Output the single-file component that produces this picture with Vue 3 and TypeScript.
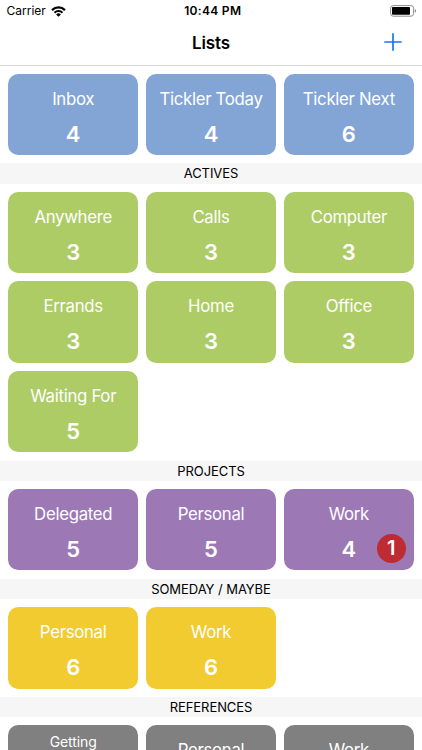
<script setup lang="ts">
interface ListCard {
  name: string
  count?: number
  overdue?: number
  compact?: boolean
}

interface Section {
  title?: string
  tone: 'blue' | 'green' | 'purple' | 'yellow' | 'gray'
  cards: ListCard[]
}

const sections: Section[] = [
  {
    tone: 'blue',
    cards: [
      { name: 'Inbox', count: 4 },
      { name: 'Tickler Today', count: 4 },
      { name: 'Tickler Next', count: 6 },
    ],
  },
  {
    title: 'Actives',
    tone: 'green',
    cards: [
      { name: 'Anywhere', count: 3 },
      { name: 'Calls', count: 3 },
      { name: 'Computer', count: 3 },
      { name: 'Errands', count: 3 },
      { name: 'Home', count: 3 },
      { name: 'Office', count: 3 },
      { name: 'Waiting For', count: 5 },
    ],
  },
  {
    title: 'Projects',
    tone: 'purple',
    cards: [
      { name: 'Delegated', count: 5 },
      { name: 'Personal', count: 5 },
      { name: 'Work', count: 4, overdue: 1 },
    ],
  },
  {
    title: 'Someday / Maybe',
    tone: 'yellow',
    cards: [
      { name: 'Personal', count: 6 },
      { name: 'Work', count: 6 },
    ],
  },
  {
    title: 'References',
    tone: 'gray',
    cards: [{ name: 'Getting', compact: true }, { name: 'Personal' }, { name: 'Work' }],
  },
]
</script>

<template>
  <div class="screen">
    <div class="status">
      <div class="carrier">
        <span>Carrier</span>
        <svg class="wifi" width="15" height="11" viewBox="0 0 15 11">
          <path d="M1 4.1a9.2 9.2 0 0 1 13 0" fill="none" stroke="#000" stroke-width="2.2" />
          <path d="M3.5 6.7a5.7 5.7 0 0 1 8 0" fill="none" stroke="#000" stroke-width="1.9" />
          <path d="M7.5 10.8 5.1 8.4a3.4 3.4 0 0 1 4.8 0z" />
        </svg>
      </div>
      <span class="time">10:44 PM</span>
      <svg class="battery" width="27" height="12" viewBox="0 0 27 12">
        <rect x="0.6" y="0.6" width="23" height="10.6" rx="2.6" fill="#fff" stroke="#8c8c8c" stroke-width="1" />
        <rect x="2" y="2" width="18" height="7.8" rx="0.8" />
        <path d="M24.8 4.1c1.8.5 1.8 3.1 0 3.6z" fill="#8c8c8c" />
      </svg>
    </div>

    <header class="nav">
      <h1>Lists</h1>
      <button class="add" type="button" aria-label="Add list">
        <svg width="18" height="18" viewBox="0 0 18 18">
          <path d="M9 .3v17.4M.3 9h17.4" fill="none" stroke="#1479ed" stroke-width="1.7" />
        </svg>
      </button>
    </header>

    <main>
      <section v-for="(section, i) in sections" :key="i">
        <h2 v-if="section.title">{{ section.title }}</h2>
        <div class="grid">
          <div v-for="card in section.cards" :key="card.name" class="card" :class="section.tone">
            <div class="name" :class="{ compact: card.compact }">{{ card.name }}</div>
            <div v-if="card.count !== undefined" class="count">{{ card.count }}</div>
            <span v-if="card.overdue" class="badge">{{ card.overdue }}</span>
          </div>
        </div>
      </section>
    </main>
  </div>
</template>

<style>
body {
  background: #fff;
  overflow: hidden;
}
</style>

<style scoped>
.screen {
  height: 750px;
  overflow: hidden;
  display: flex;
  flex-direction: column;
  background: #fff;
  color: #000;
  font-family: Inter, 'Liberation Sans', sans-serif;
}

.status {
  flex: none;
  display: grid;
  grid-template-columns: 1fr auto 1fr;
  align-items: center;
  height: 22px;
  padding: 0 5px 0 6.5px;
  box-sizing: border-box;
}

.carrier {
  display: flex;
  align-items: center;
  gap: 5px;
  font-size: 12px;
}

.carrier span,
.time {
  position: relative;
  top: -0.5px;
}

.time {
  font-size: 12px;
  font-weight: 600;
  letter-spacing: 0.3px;
  left: 1px;
}

.battery {
  justify-self: end;
}

.nav {
  flex: none;
  display: grid;
  grid-template-columns: 1fr auto 1fr;
  align-items: center;
  height: 44px;
  padding: 0 20px;
  box-sizing: border-box;
  border-bottom: 1px solid #d5d7da;
}

h1 {
  grid-column: 2;
  margin: 0;
  font-size: 17px;
  line-height: 20px;
  padding-bottom: 2px;
  font-weight: 600;
  letter-spacing: -0.1px;
}

.add {
  justify-self: end;
  display: flex;
  padding: 0 0 3px;
  border: 0;
  background: none;
}

main {
  flex: 1;
  min-height: 0;
  overflow: hidden;
  margin-top: -0.5px;
}

h2 {
  margin: 0;
  height: 20.4px;
  line-height: 20.8px;
  background: #f6f6f6;
  text-align: center;
  text-transform: uppercase;
  font-size: 13px;
  font-weight: 400;
  letter-spacing: -0.06px;
}

.grid {
  display: grid;
  grid-template-columns: repeat(3, 1fr);
  grid-auto-rows: 81.4px;
  gap: 8.25px;
  padding: 8.15px 8.4px;
}

.card {
  position: relative;
  display: flex;
  flex-direction: column;
  align-items: center;
  border-radius: 10.2px;
  color: #fff;
}

.blue {
  background: #83a5d6;
}

.green {
  background: #aecc66;
}

.purple {
  background: #9c79b5;
}

.yellow {
  background: #f2cb30;
}

.gray {
  background: #808080;
}

.name {
  height: 51px;
  line-height: 51px;
  font-size: 16.8px;
  font-weight: 400;
  letter-spacing: -0.3px;
  white-space: nowrap;
}

.compact {
  height: auto;
  padding-top: 8px;
  font-size: 14px;
  line-height: 18px;
  letter-spacing: -0.1px;
}

.count {
  font-size: 22px;
  line-height: 19px;
  font-weight: 600;
}

.badge {
  position: absolute;
  right: 8px;
  bottom: 7px;
  width: 29px;
  height: 29px;
  border-radius: 50%;
  background: #bd2b33;
  font-size: 20px;
  line-height: 29px;
  font-weight: 600;
  text-align: center;
}
</style>
